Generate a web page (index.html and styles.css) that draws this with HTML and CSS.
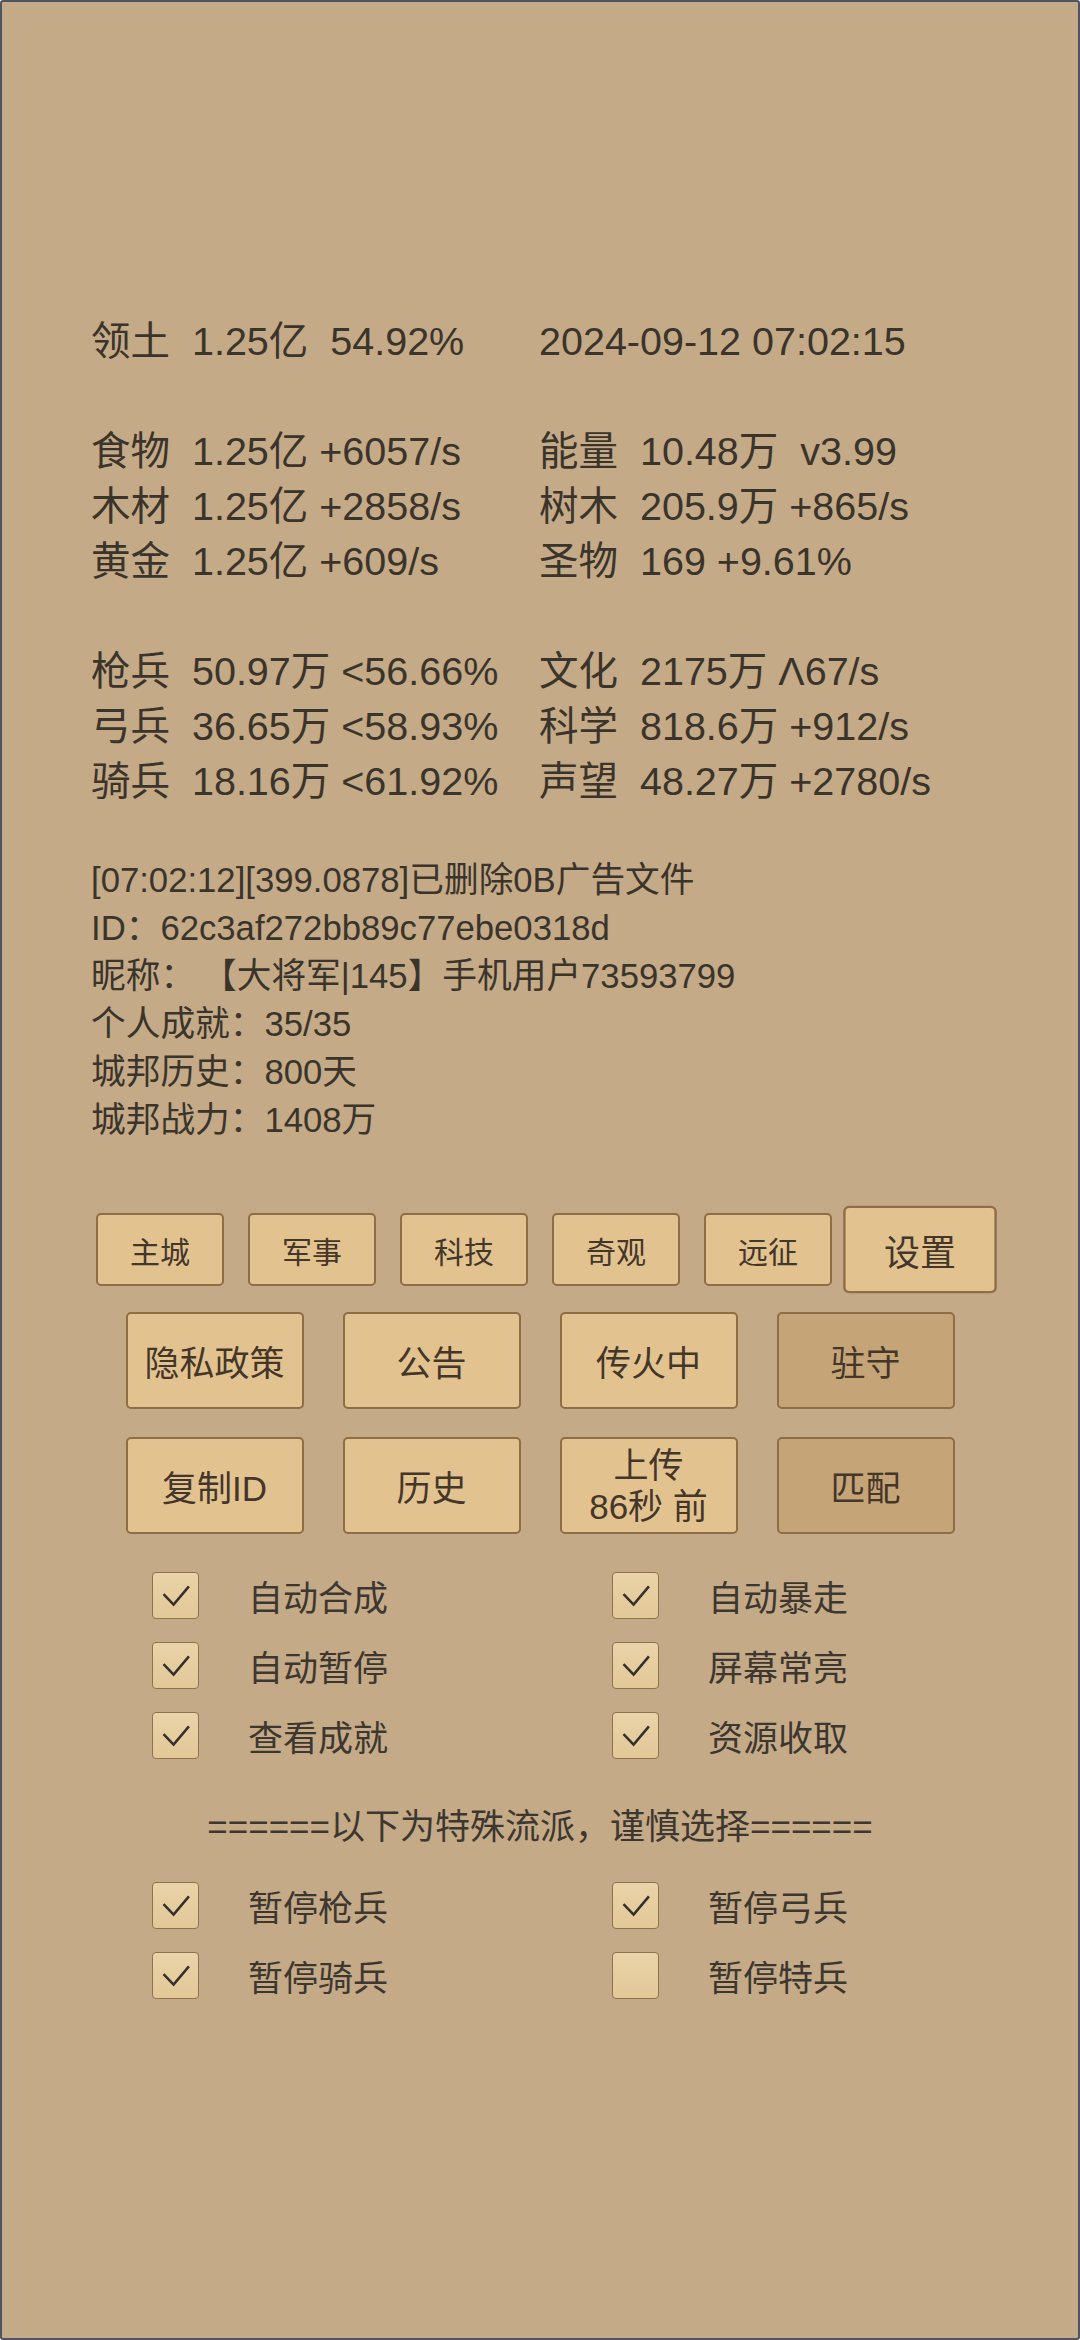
FILE: index.html
```html
<!DOCTYPE html>
<html lang="zh-CN">
<head>
    <meta charset="UTF-8">
    <meta name="viewport" content="width=device-width, initial-scale=1.0">
    <title>城邦</title>
    <link rel="stylesheet" href="styles.css">
</head>
<body>
    <div class="screen">
        <!-- 资源面板 -->
        <div class="stats">
            <div class="group">
                <div>领土  1.25亿  54.92%</div>
                <div>2024-09-12 07:02:15</div>
            </div>
            <div class="group">
                <div>食物  1.25亿 +6057/s</div>
                <div>能量  10.48万  v3.99</div>
                <div>木材  1.25亿 +2858/s</div>
                <div>树木  205.9万 +865/s</div>
                <div>黄金  1.25亿 +609/s</div>
                <div>圣物  169 +9.61%</div>
            </div>
            <div class="group">
                <div>枪兵  50.97万 &lt;56.66%</div>
                <div>文化  2175万 Λ67/s</div>
                <div>弓兵  36.65万 &lt;58.93%</div>
                <div>科学  818.6万 +912/s</div>
                <div>骑兵  18.16万 &lt;61.92%</div>
                <div>声望  48.27万 +2780/s</div>
            </div>
        </div>

        <!-- 日志和玩家信息 -->
        <div class="log">
            <div>[07:02:12][399.0878]已删除0B广告文件</div>
            <div>ID：62c3af272bb89c77ebe0318d</div>
            <div>昵称：&thinsp;【大将军|145】手机用户73593799</div>
            <div>个人成就：35/35</div>
            <div>城邦历史：800天</div>
            <div>城邦战力：1408万</div>
        </div>

        <!-- 导航 -->
        <div class="tabs">
            <div class="tab">主城</div>
            <div class="tab">军事</div>
            <div class="tab">科技</div>
            <div class="tab">奇观</div>
            <div class="tab">远征</div>
            <div class="tab tab-active">设置</div>
        </div>

        <div class="actions">
            <div class="action">隐私政策</div>
            <div class="action">公告</div>
            <div class="action">传火中</div>
            <div class="action action-dark">驻守</div>
        </div>
        <div class="actions">
            <div class="action">复制ID</div>
            <div class="action">历史</div>
            <div class="action action-two">上传<br>86秒 前</div>
            <div class="action action-dark">匹配</div>
        </div>

        <!-- 开关 -->
        <div class="toggles">
            <div class="toggle"><span class="box checked"><svg viewBox="0 0 47 47"><polyline points="11,22 21.5,33 37.5,14"/></svg></span>自动合成</div>
            <div class="toggle"><span class="box checked"><svg viewBox="0 0 47 47"><polyline points="11,22 21.5,33 37.5,14"/></svg></span>自动暴走</div>
            <div class="toggle"><span class="box checked"><svg viewBox="0 0 47 47"><polyline points="11,22 21.5,33 37.5,14"/></svg></span>自动暂停</div>
            <div class="toggle"><span class="box checked"><svg viewBox="0 0 47 47"><polyline points="11,22 21.5,33 37.5,14"/></svg></span>屏幕常亮</div>
            <div class="toggle"><span class="box checked"><svg viewBox="0 0 47 47"><polyline points="11,22 21.5,33 37.5,14"/></svg></span>查看成就</div>
            <div class="toggle"><span class="box checked"><svg viewBox="0 0 47 47"><polyline points="11,22 21.5,33 37.5,14"/></svg></span>资源收取</div>
        </div>

        <div class="divider">======以下为特殊流派，谨慎选择======</div>

        <div class="toggles toggles-special">
            <div class="toggle"><span class="box checked"><svg viewBox="0 0 47 47"><polyline points="11,22 21.5,33 37.5,14"/></svg></span>暂停枪兵</div>
            <div class="toggle"><span class="box checked"><svg viewBox="0 0 47 47"><polyline points="11,22 21.5,33 37.5,14"/></svg></span>暂停弓兵</div>
            <div class="toggle"><span class="box checked"><svg viewBox="0 0 47 47"><polyline points="11,22 21.5,33 37.5,14"/></svg></span>暂停骑兵</div>
            <div class="toggle"><span class="box"></span>暂停特兵</div>
        </div>
    </div>
</body>
</html>
```

FILE: styles.css
```css
body {
    margin: 0;
    padding: 0;
    font-family: "Liberation Sans", "Noto Sans CJK SC", sans-serif;
    color: #3b342b;
}

.screen {
    box-sizing: border-box;
    width: 1080px;
    height: 2340px;
    background: #c4aa87;
    border: 2px solid #4e5464;
    border-radius: 3px;
    padding-top: 312px;
}

.stats {
    padding-left: 89px;
    font-size: 39.5px;
    line-height: 55px;
}

.group {
    display: grid;
    grid-template-columns: 448px auto;
    margin-bottom: 55px;
}

.group > div {
    white-space: pre;
}

.group:last-child {
    margin-bottom: 0;
}

.log {
    margin-top: 47px;
    padding-left: 89px;
    font-size: 34.7px;
    line-height: 48px;
}

.tabs {
    display: flex;
    justify-content: center;
    gap: 24px;
    margin-top: 69px;
}

.tab,
.action {
    display: flex;
    align-items: center;
    justify-content: center;
    box-sizing: border-box;
    background: #e2c390;
    border: 2px solid #8e6d47;
    border-radius: 5px;
    color: #45362a;
    text-align: center;
}

.tab {
    width: 128px;
    height: 73px;
    font-size: 30px;
}

.tab-active {
    transform: scale(1.2);
}

.actions {
    display: flex;
    justify-content: center;
    gap: 39px;
    margin-top: 26px;
}

.actions + .actions {
    margin-top: 28px;
}

.action {
    width: 178px;
    height: 97px;
    font-size: 35px;
}

.action-two {
    line-height: 41px;
}

.action-dark {
    background: #c5a477;
}

.toggles {
    display: grid;
    grid-template-columns: 460px 460px;
    margin-top: 26px;
    padding-left: 150px;
}

.toggle {
    display: flex;
    align-items: center;
    height: 70px;
    font-size: 35px;
    color: #3d3730;
}

.box {
    box-sizing: border-box;
    width: 47px;
    height: 47px;
    margin-right: 49px;
    background: linear-gradient(to bottom, #e9d3a8, #e3c897);
    border: 1px solid #8f7150;
    border-radius: 4px;
}

.box svg {
    display: block;
    width: 45px;
    height: 45px;
}

.box polyline {
    fill: none;
    stroke: #35302b;
    stroke-width: 2.6;
}

.divider {
    margin-top: 22px;
    text-align: center;
    font-size: 35px;
    line-height: 70px;
    color: #3d3730;
}

.toggles-special {
    margin-top: 8px;
}
```
